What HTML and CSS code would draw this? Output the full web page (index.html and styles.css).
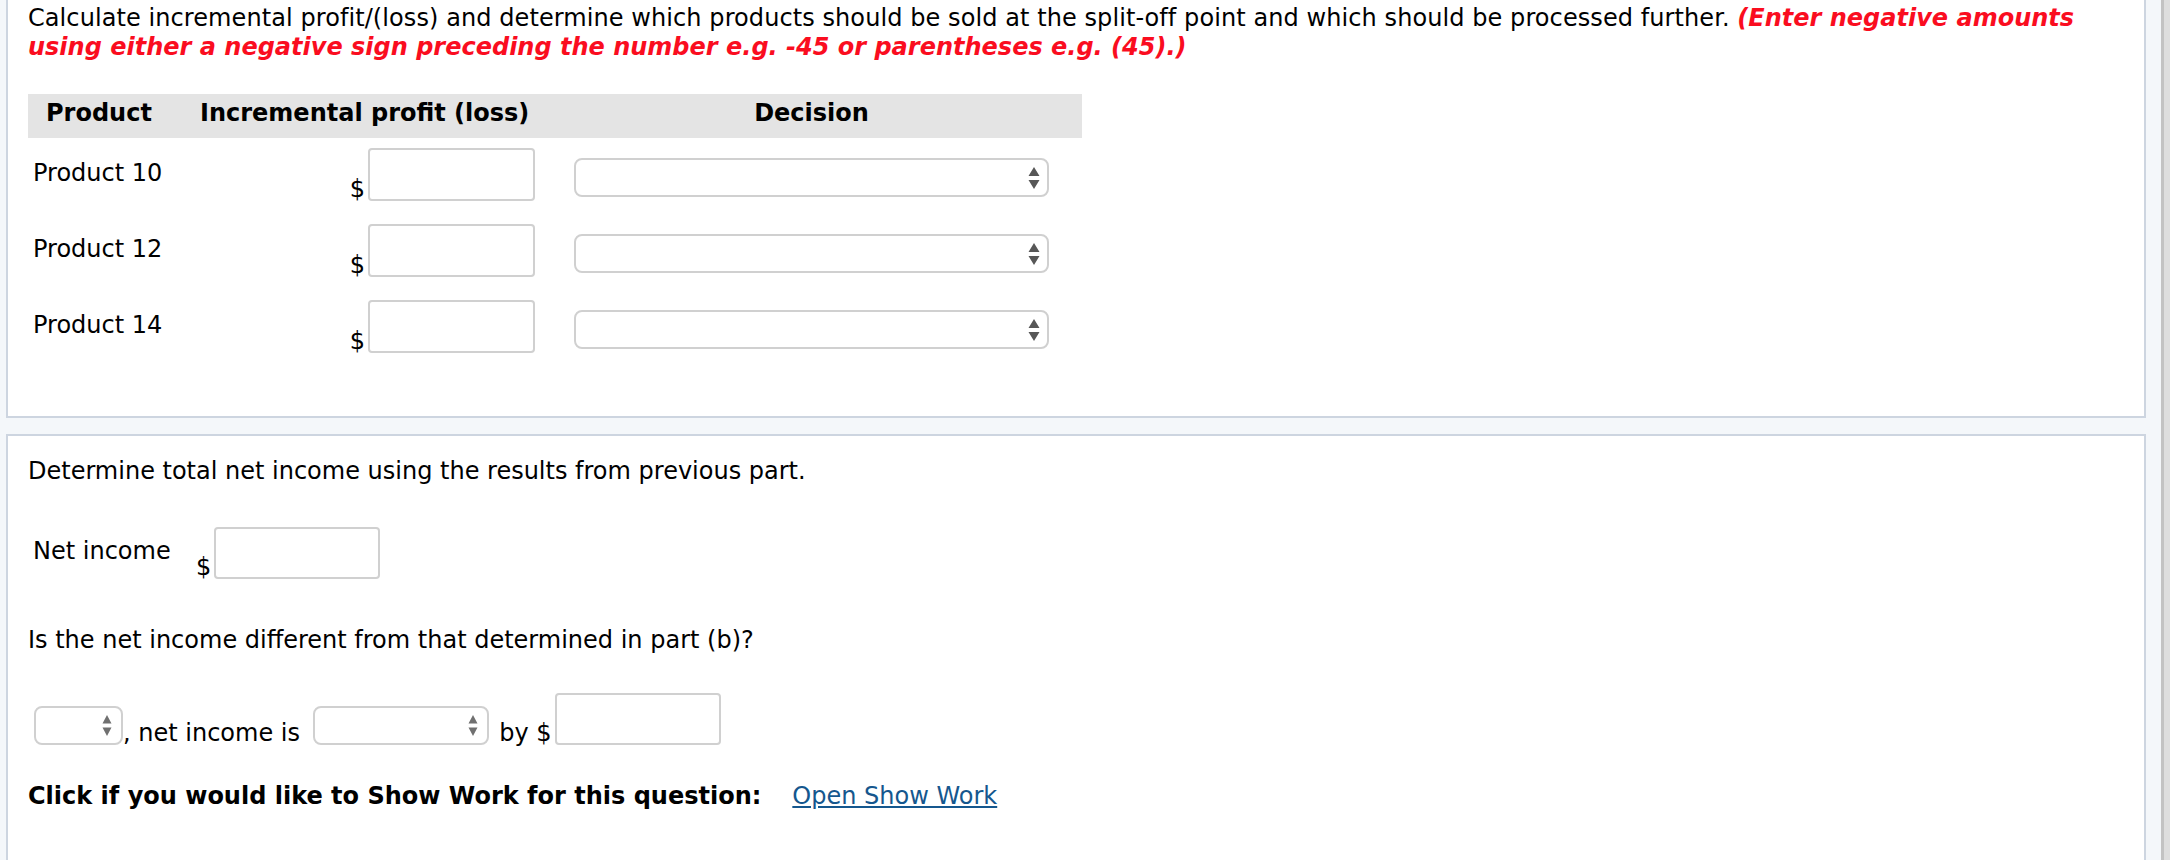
FILE: index.html
```html
<!DOCTYPE html>
<html lang="en">
<head>
<meta charset="utf-8">
<title>Incremental profit</title>
<link rel="stylesheet" href="styles.css">
</head>
<body>
<div class="page">
  <main class="main">
    <section class="panel panel-top">
      <p class="prompt">Calculate incremental profit/(loss) and determine which products should be sold at the split-off point and which should be processed further. <em class="note">(Enter negative amounts using either a negative sign preceding the number e.g. -45 or parentheses e.g. (45).)</em></p>
      <div class="table">
        <div class="thead">
          <div class="th c1">Product</div>
          <div class="th c2">Incremental profit (loss)</div>
          <div class="th c3">Decision</div>
        </div>
        <div class="tr">
          <div class="td c1">Product 10</div>
          <div class="td c2"><span class="dollar">$</span><input class="field" type="text"></div>
          <div class="td c3"><div class="select wide"><svg class="updown" width="12" height="22" viewBox="0 0 12 22"><path d="M6 0L11.5 9H0.5Z M0.5 13H11.5L6 22Z"/></svg></div></div>
        </div>
        <div class="tr">
          <div class="td c1">Product 12</div>
          <div class="td c2"><span class="dollar">$</span><input class="field" type="text"></div>
          <div class="td c3"><div class="select wide"><svg class="updown" width="12" height="22" viewBox="0 0 12 22"><path d="M6 0L11.5 9H0.5Z M0.5 13H11.5L6 22Z"/></svg></div></div>
        </div>
        <div class="tr">
          <div class="td c1">Product 14</div>
          <div class="td c2"><span class="dollar">$</span><input class="field" type="text"></div>
          <div class="td c3"><div class="select wide"><svg class="updown" width="12" height="22" viewBox="0 0 12 22"><path d="M6 0L11.5 9H0.5Z M0.5 13H11.5L6 22Z"/></svg></div></div>
        </div>
      </div>
    </section>

    <section class="panel panel-bottom">
      <p class="line">Determine total net income using the results from previous part.</p>
      <div class="net-row">
        <div class="net-label">Net income</div>
        <span class="dollar">$</span><input class="field" type="text">
      </div>
      <p class="line q2">Is the net income different from that determined in part (b)?</p>
      <div class="ans-row">
        <div class="select small"><svg class="updown light" width="10" height="21" viewBox="0 0 10 21"><path d="M5 0L9.5 8.5H0.5Z M0.5 12.5H9.5L5 21Z"/></svg></div>
        <span class="txt">, net income is&nbsp;</span>
        <div class="select medium"><svg class="updown light" width="10" height="21" viewBox="0 0 10 21"><path d="M5 0L9.5 8.5H0.5Z M0.5 12.5H9.5L5 21Z"/></svg></div>
        <span class="txt by">&nbsp;by $</span><input class="field" type="text">
      </div>
      <p class="line showwork"><strong>Click if you would like to Show Work for this question:</strong><a class="link" href="#">Open Show Work</a></p>
    </section>
  </main>
  <div class="scrollbar"></div>
</div>
</body>
</html>
```

FILE: styles.css
```css
html, body {
  margin: 0;
  padding: 0;
}

body {
  background: #f4f7fa;
  font-family: "DejaVu Sans", Verdana, sans-serif;
  font-size: 24px;
  line-height: 29px;
  color: #000;
  overflow: hidden;
}

.page {
  display: flex;
  height: 100vh;
}

.main {
  flex: 1;
  display: flex;
  flex-direction: column;
  padding: 0 15px 0 6px;
  min-width: 0;
}

.scrollbar {
  width: 6px;
  border-left: 3px solid #c3c3c3;
  background: #dedede;
}

.panel {
  background: #fff;
  border: 2px solid #cdd5e0;
  padding: 0 20px;
}

.panel-top {
  border-top: 0;
  padding-top: 4px;
  padding-bottom: 63px;
}

.panel-bottom {
  margin-top: 16px;
  flex: 1;
  border-bottom: 0;
  padding-top: 21px;
}

.prompt,
.line {
  margin: 0;
}

.prompt {
  letter-spacing: 0.08px;
}

.note {
  color: #fa0d1f;
  font-weight: bold;
  font-style: italic;
  letter-spacing: 0;
}

/* table */
.table {
  margin-top: 32px;
  width: 1054px;
}

.thead,
.tr {
  display: grid;
  grid-template-columns: 172px 358px 524px;
}

.thead {
  background: #e4e4e4;
  height: 44px;
  font-weight: bold;
}

.th {
  padding-top: 5px;
}

.th.c1 {
  padding-left: 18px;
}

.th.c3 {
  padding-left: 16px;
  padding-right: 33px;
  text-align: center;
}

.tr {
  height: 53px;
  margin-top: 23px;
}

.thead + .tr {
  margin-top: 10px;
}

.td.c1 {
  padding: 11px 0 0 5px;
}

.td.c2 {
  display: flex;
  justify-content: flex-end;
  align-items: flex-end;
  padding-right: 23px;
}

.td.c3 {
  padding: 10px 0 0 16px;
}

.dollar {
  line-height: 1;
}

.field {
  box-sizing: border-box;
  width: 167px;
  height: 53px;
  margin: 0 0 0 3px;
  padding: 0 6px;
  border: 2px solid #d0d0d0;
  border-radius: 4px;
  background: #fff;
  font: inherit;
  outline: none;
}

.select {
  box-sizing: border-box;
  height: 39px;
  border: 2px solid #d0d0d0;
  border-radius: 8px;
  background: #fff;
  display: flex;
  align-items: center;
  justify-content: flex-end;
  padding-right: 7px;
}

.select.wide {
  width: 475px;
}

.select.small {
  width: 89px;
  padding-right: 9px;
}

.select.medium {
  width: 176px;
  padding-right: 9px;
  margin-left: 5px;
}

.updown {
  display: block;
  fill: #575757;
}

.updown.light {
  fill: #707070;
}

/* second panel */
.net-row {
  display: flex;
  align-items: flex-end;
  margin-top: 41px;
  height: 52px;
}

.net-row .field,
.ans-row .field {
  height: 52px;
  width: 166px;
}

.net-label {
  align-self: flex-start;
  box-sizing: border-box;
  width: 168px;
  padding: 10px 0 0 5px;
}

.q2 {
  margin-top: 47px;
}

.ans-row {
  display: flex;
  align-items: flex-end;
  margin-top: 38px;
  padding-left: 6px;
  height: 52px;
}

.txt {
  line-height: 1;
  white-space: pre;
}

.txt.by {
  margin-left: 3px;
}

.showwork {
  margin-top: 37px;
}

.link {
  margin-left: 31px;
  color: #15578e;
  text-decoration: underline;
}
```
